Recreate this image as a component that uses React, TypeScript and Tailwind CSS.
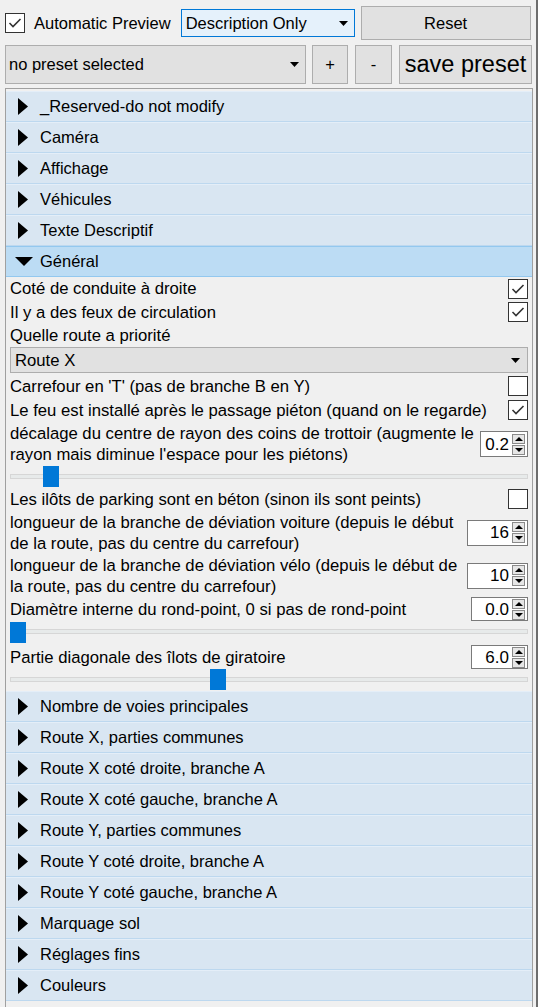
import React, { FC } from 'react';

const font = "font-['Liberation_Sans',Arial,sans-serif]";

const Check: FC<{ checked?: boolean; className?: string }> = ({ checked, className = '' }) => (
  <div className={`w-[20px] h-[20px] bg-white border border-[#333333] flex items-center justify-center shrink-0 ${className}`}>
    {checked && (
      <svg width="14" height="12" viewBox="0 0 14 12">
        <polyline points="1.5,6 5,9.5 12.5,2" fill="none" stroke="#333333" strokeWidth="1.6" />
      </svg>
    )}
  </div>
);

const ArrowDown: FC = () => (
  <svg width="9" height="5" viewBox="0 0 9 5">
    <polygon points="0,0 9,0 4.5,5" fill="#000" />
  </svg>
);

const Header: FC<{ label: string; open?: boolean }> = ({ label, open }) => (
  <div
    className={`h-[31px] flex items-center border-y ${
      open ? 'bg-[#bcdcf4] border-[#93c8ef] pl-[9px]' : 'bg-[#d9e6f2] border-t-[#e4eef8] border-b-[#bdd8ef] pl-[12px]'
    }`}
  >
    {open ? (
      <svg width="18" height="9" viewBox="0 0 18 9" className="mr-[7px]">
        <polygon points="0,0 18,0 9,9" fill="#000" />
      </svg>
    ) : (
      <svg width="10" height="17" viewBox="0 0 10 17" className="mr-[12px]">
        <polygon points="0,0 10,8.5 0,17" fill="#000" />
      </svg>
    )}
    <span className="text-[16.5px] text-black">{label}</span>
  </div>
);

const Spin: FC<{ value: string; className: string }> = ({ value, className }) => (
  <div className={`flex items-center bg-white border border-[#7a7a7a] shrink-0 ${className}`}>
    <span className="flex-1 text-right pr-[3px] text-[17px] leading-none text-black">{value}</span>
    <div className="flex flex-col gap-[1px] pr-[2px]">
      <div className="w-[13px] h-[10px] bg-[#e6e6e6] border border-[#8a8a8a] flex items-center justify-center">
        <svg width="8" height="4" viewBox="0 0 8 4">
          <polygon points="0,4 8,4 4,0" fill="#000" />
        </svg>
      </div>
      <div className="w-[13px] h-[10px] bg-[#e6e6e6] border border-[#8a8a8a] flex items-center justify-center">
        <svg width="8" height="4" viewBox="0 0 8 4">
          <polygon points="0,0 8,0 4,4" fill="#000" />
        </svg>
      </div>
    </div>
  </div>
);

const Slider: FC<{ handle: string; className?: string }> = ({ handle, className = 'h-[21px]' }) => (
  <div className={`relative ${className}`}>
    <div className="absolute left-0 right-0 top-[8px] h-[5px] bg-[#e7eaea] border border-[#d6d6d6]" />
    <div className={`absolute top-0 h-[21px] w-[16px] bg-[#0078d7] ${handle}`} />
  </div>
);

const Row: FC<{ className: string; children: React.ReactNode }> = ({ className, children }) => (
  <div className={`flex items-center justify-between ${className}`}>{children}</div>
);

const topHeaders = ['_Reserved-do not modify', 'Caméra', 'Affichage', 'Véhicules', 'Texte Descriptif'];
const bottomHeaders = [
  'Nombre de voies principales',
  'Route X, parties communes',
  'Route X coté droite, branche A',
  'Route X coté gauche, branche A',
  'Route Y, parties communes',
  'Route Y coté droite, branche A',
  'Route Y coté gauche, branche A',
  'Marquage sol',
  'Réglages fins',
  'Couleurs',
];

const App: FC = () => {
  return (
    <div className={`w-[538px] h-[1007px] bg-[#f0f0f0] border-r-2 border-[#6d6d6d] overflow-hidden text-black ${font}`}>
      {/* toolbar */}
      <div className="flex items-center h-[34px] mt-[6px] pl-[5px]">
        <Check checked />
        <span className="ml-[9px] text-[16.5px]">Automatic Preview</span>
        <div className="ml-[10px] w-[174px] h-[28px] bg-[#e5f1fb] border border-[#0078d7] flex items-center justify-between pl-[4px] pr-[6px] text-[16.5px]">
          <span>Description Only</span>
          <ArrowDown />
        </div>
        <button className="ml-[6px] w-[170px] h-[34px] bg-[#e1e1e1] border border-[#adadad] text-[16.5px]">Reset</button>
      </div>
      <div className="flex items-center h-[39px] mt-[5px] pl-[5px]">
        <div className="w-[301px] h-[39px] bg-[#e1e1e1] border border-[#adadad] flex items-center justify-between pl-[3px] pr-[6px] text-[16.5px]">
          <span>no preset selected</span>
          <ArrowDown />
        </div>
        <button className="ml-[6px] w-[36px] h-[39px] bg-[#e1e1e1] border border-[#adadad] text-[16.5px]">+</button>
        <button className="ml-[7px] w-[37px] h-[39px] bg-[#e1e1e1] border border-[#adadad] text-[16.5px]">-</button>
        <button className="ml-[7px] w-[133px] h-[39px] bg-[#e1e1e1] border border-[#adadad] text-[23.5px] leading-none">save preset</button>
      </div>

      {/* property tree */}
      <div className="mt-[4px] ml-[5px] w-[528px] h-[930px] border-l border-t border-r border-[#a0a0a0] pt-[2px]">
        {topHeaders.map((h) => (
          <Header key={h} label={h} />
        ))}
        <Header label="Général" open />
        <div className="px-[4px] text-[16.7px] leading-[21px]">
          <Row className="h-[23px]">
            <span>Coté de conduite à droite</span>
            <Check checked />
          </Row>
          <Row className="h-[24px]">
            <span>Il y a des feux de circulation</span>
            <Check checked />
          </Row>
          <Row className="h-[23px]">
            <span>Quelle route a priorité</span>
          </Row>
          <div className="h-[26px] bg-[#e1e1e1] border border-[#adadad] flex items-center justify-between pl-[4px] pr-[7px]">
            <span>Route X</span>
            <ArrowDown />
          </div>
          <Row className="h-[24px] mt-[1px]">
            <span>Carrefour en 'T' (pas de branche B en Y)</span>
            <Check />
          </Row>
          <Row className="h-[24px]">
            <span className="whitespace-nowrap">Le feu est installé après le passage piéton (quand on le regarde)</span>
            <Check checked />
          </Row>
          <Row className="h-[44px]">
            <span className="whitespace-nowrap">
              décalage du centre de rayon des coins de trottoir (augmente le
              <br />
              rayon mais diminue l'espace pour les piétons)
            </span>
            <Spin value="0.2" className="w-[48px] h-[26px]" />
          </Row>
          <Slider handle="left-[33px]" />
          <Row className="h-[24px]">
            <span>Les ilôts de parking sont en béton (sinon ils sont peints)</span>
            <Check />
          </Row>
          <Row className="h-[43px]">
            <span className="whitespace-nowrap">
              longueur de la branche de déviation voiture (depuis le début
              <br />
              de la route, pas du centre du carrefour)
            </span>
            <Spin value="16" className="w-[61px] h-[26px]" />
          </Row>
          <Row className="h-[43px]">
            <span className="whitespace-nowrap">
              longueur de la branche de déviation vélo (depuis le début de
              <br />
              la route, pas du centre du carrefour)
            </span>
            <Spin value="10" className="w-[61px] h-[26px]" />
          </Row>
          <Row className="h-[24px]">
            <span>Diamètre interne du rond-point, 0 si pas de rond-point</span>
            <Spin value="0.0" className="w-[57px] h-[24px]" />
          </Row>
          <Slider handle="left-0 top-[1px]" className="h-[22px]" />
          <Row className="h-[24px] mt-[2px]">
            <span>Partie diagonale des îlots de giratoire</span>
            <Spin value="6.0" className="w-[57px] h-[24px]" />
          </Row>
          <Slider handle="left-[200px]" className="h-[22px]" />
        </div>
        {bottomHeaders.map((h) => (
          <Header key={h} label={h} />
        ))}
      </div>
    </div>
  );
};

export default App;
